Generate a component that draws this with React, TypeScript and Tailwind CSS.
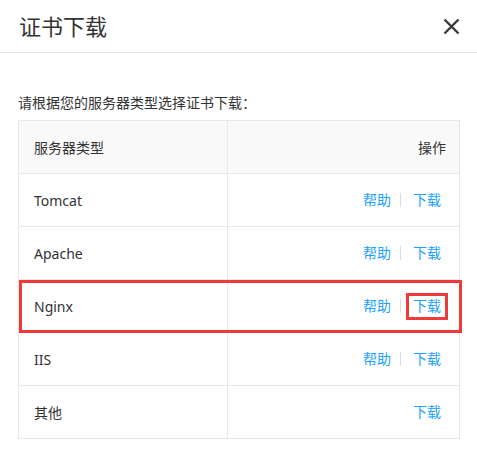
import React from 'react';

type Row = { name: string; help: boolean; highlight?: boolean };

const rows: Row[] = [
  { name: 'Tomcat', help: true },
  { name: 'Apache', help: true },
  { name: 'Nginx', help: true, highlight: true },
  { name: 'IIS', help: true },
  { name: '其他', help: false },
];

const font = { fontFamily: '"Noto Sans", "Noto Sans CJK SC", sans-serif' };

export default function App() {
  return (
    <div className="w-[477px] h-[459px] bg-white text-[#333]" style={font}>
      {/* Header */}
      <div className="h-[53px] border-b border-[#e5e5e5] flex items-center justify-between pl-[19px] pr-[17px]">
        <h1 className="text-[22px] leading-none text-[#333] font-normal">证书下载</h1>
        <button className="w-[18px] h-[18px] flex items-center justify-center text-[#3a3a3a]">
          <svg width="17" height="17" viewBox="0 0 17 17" fill="none" stroke="currentColor" strokeWidth="2.4">
            <path d="M1.5 1.5L15.5 15.5M15.5 1.5L1.5 15.5" />
          </svg>
        </button>
      </div>

      {/* Body */}
      <div className="pt-[40px] pl-[18px]">
        <p className="text-[14px] leading-[20px]">请根据您的服务器类型选择证书下载：</p>

        <div className="mt-[7px] w-[442px] border-t border-l border-r border-[#e8e8e8] text-[14px]">
          <div className="flex h-[53px] border-b border-[#e8e8e8] bg-[#f9f9f9]">
            <div className="w-[209px] border-r border-[#e8e8e8] flex items-center pl-[15px]">服务器类型</div>
            <div className="flex-1 flex items-center justify-end pr-[13px]">操作</div>
          </div>

          {rows.map((r) => (
            <div key={r.name} className="relative flex h-[53px] border-b border-[#e8e8e8]">
              <div className="w-[209px] border-r border-[#e8e8e8] flex items-center pl-[15px]">{r.name}</div>
              <div className="flex-1 flex items-center justify-end pr-[13px] text-[#20a0ff]">
                {r.help && (
                  <>
                    <a className="px-[5px] leading-[20px] cursor-pointer">帮助</a>
                    <span className="w-px h-[14px] bg-[#dcdcdc] ml-[4px] mr-[7px]" />
                  </>
                )}
                <a className="relative px-[5px] leading-[20px] cursor-pointer">
                  下载
                  {r.highlight && (
                    <span className="absolute left-[-2px] right-[-2px] top-[-3px] bottom-[-4px] border-[3px] border-[#f03a3a]" />
                  )}
                </a>
              </div>
              {r.highlight && (
                <div className="absolute left-0 top-0 w-[443px] h-[53px] border-[3px] border-[#f03a3a] pointer-events-none" />
              )}
            </div>
          ))}
        </div>
      </div>
    </div>
  );
}
